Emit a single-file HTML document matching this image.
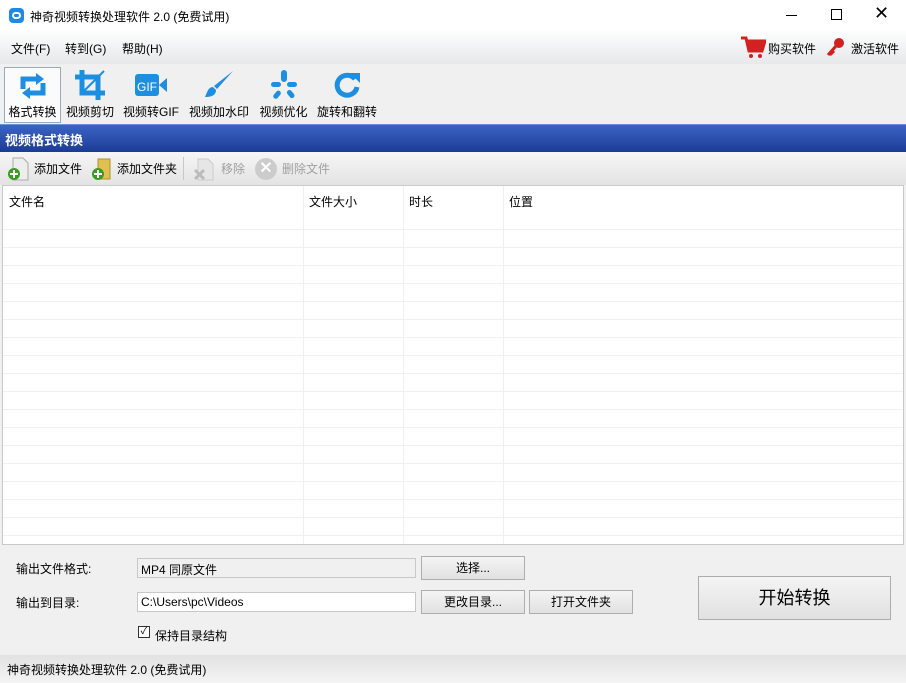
<!DOCTYPE html><html><head><meta charset="utf-8"><style>
*{margin:0;padding:0;box-sizing:border-box}
body{width:906px;height:683px;position:relative;overflow:hidden;background:#f0f0f0;font-family:"Liberation Sans","Noto Sans CJK SC",sans-serif;font-size:12px;color:#000}
.a{position:absolute}
#title{left:0;top:0;width:906px;height:31px;background:#fff}
#menu{left:0;top:31px;width:906px;height:33px;background:linear-gradient(#fdfdfd,#e6e8ea)}
#tb{left:0;top:64px;width:906px;height:60px;background:#f0f0f0}
.tool{position:absolute;top:66px;height:56px;text-align:center;font-size:12px}
.tool svg{display:block;margin:3px auto 2px}
#hdr{left:0;top:124px;width:906px;height:28px;background:linear-gradient(#3c63c4,#1b3c95);color:#fff;font-weight:bold;font-size:13px;padding:5px 0 0 5px;border-top:1px solid #6d8fd8}
#sub{left:0;top:152px;width:906px;height:33px;background:linear-gradient(#f6f6f6,#e3e3e3)}
#list{left:2px;top:185px;width:902px;height:360px;background:#fff;border:1px solid #c9c9c9;overflow:hidden;
background-image:repeating-linear-gradient(#fff 0 17px,#f0f0f0 17px 18px);background-position:0 26px}
.col{position:absolute;top:0;height:360px;width:1px;background:#f0f0f0}
.btn{position:absolute;height:24px;border:1px solid #adadad;background:linear-gradient(#f4f4f4,#e1e1e1);text-align:center;line-height:22px;font-size:12px}
.inp{position:absolute;height:20px;border:1px solid #c8c8c8;background:#fff;padding:2px 0 0 3px;font-size:12px}
#status{left:0;top:655px;width:906px;height:28px;background:linear-gradient(#e2e2e2,#f4f4f4);padding:6px 0 0 7px;font-size:12px}
</style></head><body>
<div class="a" id="title">
<div class="a" style="left:9px;top:8px;width:15px;height:15px;border-radius:4px;background:#1e88e5"><div class="a" style="left:3px;top:4px;width:9px;height:7px;border:2px solid #fff;border-radius:4px"></div></div>
<div class="a" style="left:30px;top:8px;font-size:12px">神奇视频转换处理软件 2.0 (免费试用)</div>
<div class="a" style="left:786px;top:15px;width:11px;height:1px;background:#000"></div>
<div class="a" style="left:831px;top:9px;width:11px;height:11px;border:1px solid #000"></div>
<div class="a" style="left:874px;top:3px;font-size:18px;font-weight:200">✕</div>
</div>
<div class="a" id="menu">
<div class="a" style="left:11px;top:9px">文件(F)</div>
<div class="a" style="left:65px;top:9px">转到(G)</div>
<div class="a" style="left:122px;top:9px">帮助(H)</div>
<svg class="a" style="left:740px;top:5px" width="26" height="24" viewBox="0 0 26 24"><path d="M1 2h5l3 13h13l3-10H8" fill="none" stroke="#d32020" stroke-width="3"/><rect x="8" y="6" width="16" height="8" fill="#d32020"/><circle cx="11" cy="20" r="2" fill="#d32020"/><circle cx="20" cy="20" r="2" fill="#d32020"/></svg>
<div class="a" style="left:768px;top:9px">购买软件</div>
<svg class="a" style="left:826px;top:5px" width="20" height="22" viewBox="0 0 20 22"><circle cx="13" cy="7" r="5" fill="#d32020"/><path d="M10 10L2 19M4 17l2 2M6 15l2 2" stroke="#d32020" stroke-width="3"/></svg>
<div class="a" style="left:851px;top:9px">激活软件</div>
</div>
<div class="a" id="tb"></div>
<div class="tool" style="left:4px;width:57px;border:1px solid #9ab;background:#fbfbfb;top:67px"><svg width="32" height="30" viewBox="0 0 32 30"><path d="M6 18V8h16" fill="none" stroke="#1e8fe0" stroke-width="5"/><path d="M19 2l8 6-8 6z" fill="#1e8fe0"/><path d="M26 12v10H10" fill="none" stroke="#1e8fe0" stroke-width="5"/><path d="M13 16l-8 6 8 6z" fill="#1e8fe0"/></svg>格式转换</div>
<div class="tool" style="left:63px;width:54px"><svg width="32" height="32" viewBox="0 0 32 32"><path d="M8 1v23h23M1 8h23v23" fill="none" stroke="#1e8fe0" stroke-width="5"/><path d="M8 24L30 2" stroke="#1e8fe0" stroke-width="2"/></svg>视频剪切</div>
<div class="tool" style="left:120px;width:62px"><svg width="34" height="32" viewBox="0 0 34 32"><rect x="1" y="5" width="24" height="22" rx="3" fill="#1e8fe0"/><path d="M25 16l8-7v14z" fill="#1e8fe0"/><text x="3" y="22" font-family="Liberation Sans" font-size="12" fill="#fff">GIF</text></svg>视频转GIF</div>
<div class="tool" style="left:186px;width:66px"><svg width="32" height="32" viewBox="0 0 32 32"><path d="M30 2L14 20l-3-3z" fill="#1e8fe0"/><path d="M10 18c-5 0-6 6-8 10 5 0 11-1 11-7z" fill="#1e8fe0"/></svg>视频加水印</div>
<div class="tool" style="left:256px;width:55px"><svg width="32" height="32" viewBox="0 0 32 32"><g fill="#1e8fe0"><rect x="13" y="1" width="6" height="12" rx="3"/><rect x="3" y="13" width="10" height="5" rx="2.5"/><rect x="19" y="13" width="10" height="5" rx="2.5"/><rect x="7" y="21" width="5" height="9" rx="2.5" transform="rotate(40 9 25)"/><rect x="20" y="21" width="5" height="9" rx="2.5" transform="rotate(-40 22 25)"/></g></svg>视频优化</div>
<div class="tool" style="left:315px;width:64px"><svg width="32" height="32" viewBox="0 0 32 32"><path d="M24 10A10 10 0 1 0 26 18" fill="none" stroke="#1e8fe0" stroke-width="5"/><path d="M19 4h10v10z" fill="#1e8fe0"/></svg>旋转和翻转</div>
<div class="a" id="hdr">视频格式转换</div>
<div class="a" id="sub">
<svg class="a" style="left:7px;top:5px" width="24" height="24"><path d="M6 1h10l5 5v17H6z" fill="#eee" stroke="#aaa"/><circle cx="7" cy="17" r="6" fill="#3a9d23"/><path d="M7 13v8M3 17h8" stroke="#fff" stroke-width="2"/></svg>
<div class="a" style="left:34px;top:8px">添加文件</div>
<svg class="a" style="left:90px;top:5px" width="24" height="24"><path d="M8 2h12v20H8z" fill="#e0c050" stroke="#b09030"/><circle cx="8" cy="17" r="6" fill="#3a9d23"/><path d="M8 13v8M4 17h8" stroke="#fff" stroke-width="2"/></svg>
<div class="a" style="left:117px;top:8px">添加文件夹</div>
<div class="a" style="left:183px;top:5px;width:1px;height:23px;background:#c8c8c8"></div>
<svg class="a" style="left:192px;top:5px" width="24" height="24"><path d="M6 2h10l5 5v16H6z" fill="#e6e6e6" stroke="#ccc"/><path d="M3 13l9 9M12 13l-9 9" stroke="#bbb" stroke-width="3"/></svg>
<div class="a" style="left:221px;top:8px;color:#a0a0a0">移除</div>
<div class="a" style="left:255px;top:6px;width:22px;height:22px;border-radius:50%;background:#ccc;color:#fff;text-align:center;font-size:16px;line-height:22px;font-weight:bold">✕</div>
<div class="a" style="left:282px;top:8px;color:#a0a0a0">删除文件</div>
</div>
<div class="a" id="list">
<div class="a" style="left:0;top:0;width:902px;height:26px;background:#fff"></div>
<div class="col" style="left:300px"></div><div class="col" style="left:400px"></div><div class="col" style="left:500px"></div>
<div class="a" style="left:6px;top:7px">文件名</div>
<div class="a" style="left:306px;top:7px">文件大小</div>
<div class="a" style="left:406px;top:7px">时长</div>
<div class="a" style="left:506px;top:7px">位置</div>
</div>
<div class="a" style="left:16px;top:560px">输出文件格式:</div>
<div class="inp" style="left:137px;top:558px;width:279px;background:#f0f0f0">MP4 同原文件</div>
<div class="btn" style="left:421px;top:556px;width:104px">选择...</div>
<div class="a" style="left:16px;top:594px">输出到目录:</div>
<div class="inp" style="left:137px;top:592px;width:279px">C:\Users\pc\Videos</div>
<div class="btn" style="left:421px;top:590px;width:104px">更改目录...</div>
<div class="btn" style="left:529px;top:590px;width:104px">打开文件夹</div>
<div class="a" style="left:138px;top:626px;width:12px;height:12px;border:1px solid #333;background:#fff;font-size:10px;line-height:10px;text-align:center">✓</div>
<div class="a" style="left:155px;top:627px">保持目录结构</div>
<div class="btn" style="left:698px;top:576px;width:193px;height:44px;line-height:42px;font-size:18px">开始转换</div>
<div class="a" id="status">神奇视频转换处理软件 2.0 (免费试用)</div>
</body></html>
